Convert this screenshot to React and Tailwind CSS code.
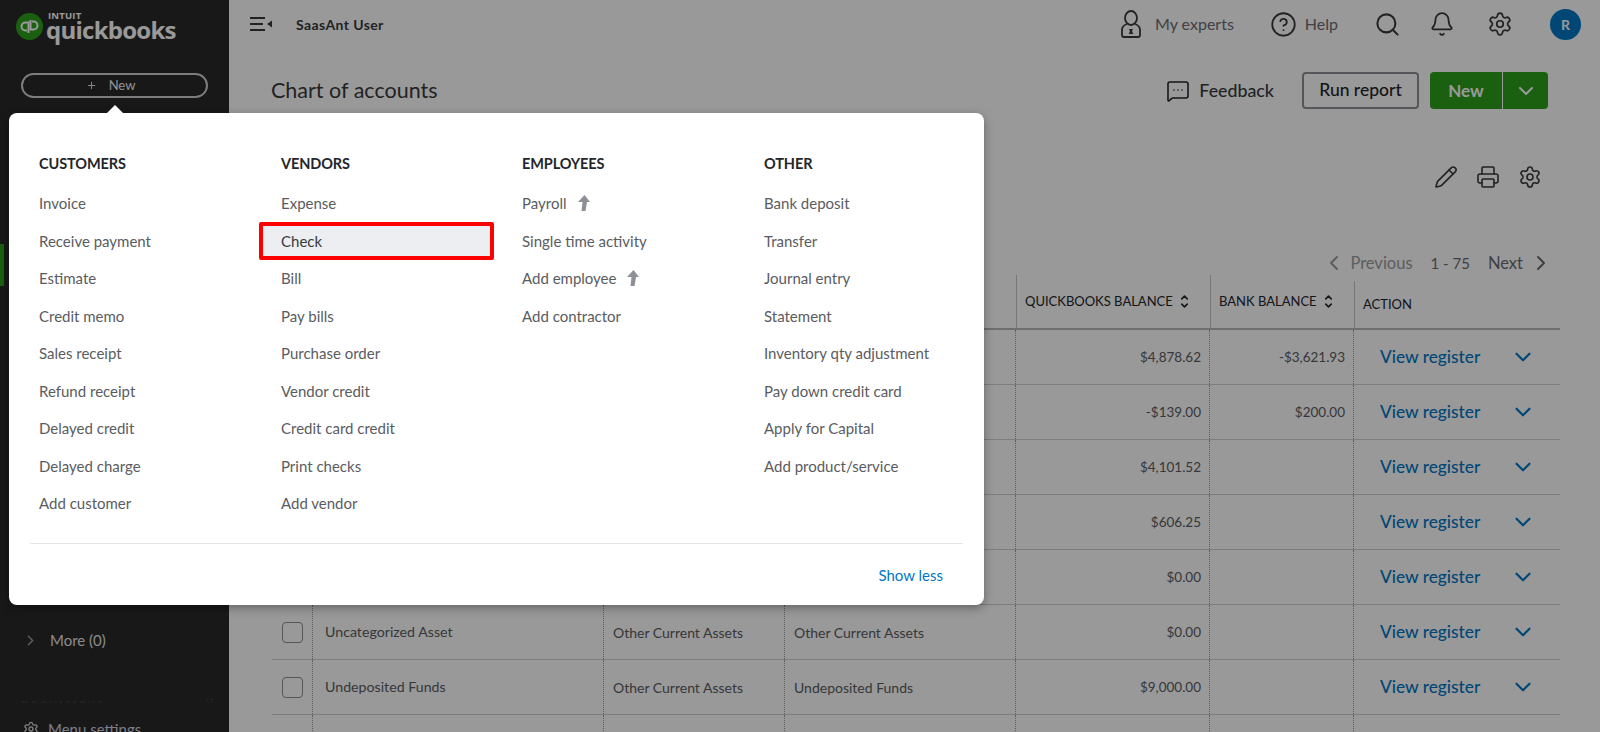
import React from "react";
import { Search, Bell, Settings, CircleHelp, Pencil, Printer, MessageSquareMore, ChevronDown, ChevronLeft, ChevronRight, ChevronUp, Plus, Pin } from "lucide-react";

const columns = [
  { title: "CUSTOMERS", items: ["Invoice", "Receive payment", "Estimate", "Credit memo", "Sales receipt", "Refund receipt", "Delayed credit", "Delayed charge", "Add customer"] },
  { title: "VENDORS", items: ["Expense", "Check", "Bill", "Pay bills", "Purchase order", "Vendor credit", "Credit card credit", "Print checks", "Add vendor"] },
  { title: "EMPLOYEES", items: ["Payroll", "Single time activity", "Add employee", "Add contractor"] },
  { title: "OTHER", items: ["Bank deposit", "Transfer", "Journal entry", "Statement", "Inventory qty adjustment", "Pay down credit card", "Apply for Capital", "Add product/service"] },
];
const upgrade = ["Payroll", "Add employee"];

const rows = [
  { qb: "$4,878.62", bank: "-$3,621.93" },
  { qb: "-$139.00", bank: "$200.00" },
  { qb: "$4,101.52" },
  { qb: "$606.25" },
  { qb: "$0.00" },
  { name: "Uncategorized Asset", type: "Other Current Assets", detail: "Other Current Assets", qb: "$0.00" },
  { name: "Undeposited Funds", type: "Other Current Assets", detail: "Undeposited Funds", qb: "$9,000.00" },
  { name: "", type: "", detail: "", qb: "" },
];

const grid = "grid grid-cols-[41px_291px_181px_231px_194px_144px_206px]";
const font = "font-['Lato','Noto_Sans',sans-serif]";

function Logo() {
  return (
    <div className="shrink-0 flex items-center gap-[3px] pl-[16px] pt-[12px]">
      <svg width="27" height="27" viewBox="0 0 27 27">
        <circle cx="13.5" cy="13.5" r="13.5" fill="#2ca01c" />
        <path d="M12.5 20V9.5H9.5a4 4 0 0 0 0 8H11" fill="none" stroke="#fff" strokeWidth="2" />
        <path d="M14.5 7v9.5h3a4 4 0 0 0 0-8H16" fill="none" stroke="#fff" strokeWidth="2" />
      </svg>
      <div className="flex flex-col text-white font-['Open_Sans',sans-serif]">
        <span className="ml-[2px] text-[9.5px] leading-[7px] font-bold tracking-[0.2px]">INTUIT</span>
        <span className="font-bold text-[24px] leading-[22px] tracking-[-0.75px]">quickbooks</span>
      </div>
    </div>
  );
}

function HamburgerIcon() {
  return (
    <svg width="22" height="14" viewBox="0 0 22 14" fill="none" stroke="#393a3d" strokeWidth="2">
      <path d="M0 1h15M0 7h13M0 13h15" />
      <path d="M22 3.5v7L17 7z" fill="#393a3d" stroke="none" />
    </svg>
  );
}

function ExpertIcon() {
  return (
    <svg width="20" height="28" viewBox="0 0 20 28" fill="none" stroke="#393a3d" strokeWidth="1.8">
      <ellipse cx="10" cy="8" rx="6" ry="7" />
      <path d="M6 14c-3 1-5 3-5 6v5a2 2 0 0 0 2 2h14a2 2 0 0 0 2-2v-5c0-3-2-5-5-6" />
      <path d="M8 19h4l-1 2 1.2 3H7.8L9 21z" fill="#393a3d" stroke="none" />
    </svg>
  );
}

function UpgradeArrow() {
  return (
    <svg width="13" height="16" viewBox="0 0 13 16" className="ml-[10px] shrink-0">
      <path d="M7.5 0L13 7H10L8.5 16H4.5L5.5 7H1z" fill="#8d9096" />
    </svg>
  );
}

function SortIcon() {
  return (
    <span className="ml-[6px] flex flex-col text-[#24262a]">
      <ChevronUp size={11} strokeWidth={3.5} className="-mb-[3px]" />
      <ChevronDown size={11} strokeWidth={3.5} />
    </span>
  );
}

function MenuItem({ label }) {
  if (label === "Check") {
    return (
      <a className="flex items-center h-[37.5px] w-[235px] -ml-[22px] pl-[18px] border-[4px] border-[#ff0000] rounded-[2px] bg-[#eceef1] text-[#393a3d]">
        {label}
      </a>
    );
  }
  return (
    <a className="flex items-center h-[37.5px] text-[#5a5c61]">
      {label}
      {upgrade.includes(label) && <UpgradeArrow />}
    </a>
  );
}

function NewMenu() {
  return (
    <div className="absolute z-20 left-[9px] top-[113px] w-[975px] h-[492px] bg-white rounded-lg shadow-[0_3px_10px_rgba(0,0,0,0.35)] flex flex-col text-[15px]">
      <span className="absolute left-[98px] -top-[8px] w-0 h-0 border-x-[8px] border-x-transparent border-b-[8px] border-b-white" />
      <div className="grid grid-cols-[242px_241px_242px_1fr] pl-[30px] pt-[41px] h-[430px]">
        {columns.map((c) => (
          <div key={c.title}>
            <h3 className="text-[14.5px] font-bold text-[#24262a] h-[20px] leading-[20px] mb-[10.5px] tracking-[-0.1px]">{c.title}</h3>
            {c.items.map((i) => <MenuItem key={i} label={i} />)}
          </div>
        ))}
      </div>
      <div className="mx-[21px] border-t border-[#e3e5e8]" />
      <div className="flex justify-end pr-[41px] pt-[21px] text-[#0077c5] text-[15px] leading-[20px]">Show less</div>
    </div>
  );
}

function Sidebar() {
  return (
    <aside className="w-[229px] shrink-0 bg-[#282828] flex flex-col h-full overflow-hidden">
      <Logo />
      <button className="shrink-0 mt-[32px] ml-[21px] w-[187px] h-[25px] pr-[8px] rounded-full border-2 border-[#d0d0d0] text-[#f0f0f0] text-[13px] flex items-center justify-center gap-[12px]">
        <Plus size={11} />
        <span>New</span>
      </button>
      <div className="shrink-0 mt-[146px] w-[4px] h-[42px] bg-[#2ca01c]" />
      <div className="shrink-0 mt-[342px] ml-[23px] flex items-center gap-[12px] text-[#e4e4e4] text-[15px] h-[24px]">
        <ChevronRight size={17} className="text-[#a0a0a0] -ml-[1px]" />
        <span className="-ml-[1px]">More (0)</span>
      </div>
      <div className="shrink-0 mt-[46px] pl-[21px] pr-[13px] flex items-start justify-between h-[5px] overflow-hidden text-[#3a3a3a] text-[12px] leading-[14px] font-bold tracking-[0.5px]">
        <span>BOOKMARKS</span>
        <Pin size={12} className="text-[#3a3a3a]" />
      </div>
      <div className="shrink-0 mt-[16px] ml-[23px] flex items-center gap-[9px] text-[#d0d0e0] text-[15px] h-[20px]">
        <Settings size={16} className="text-[#d4d4d4]" />
        <span>Menu settings</span>
      </div>
    </aside>
  );
}

function TopBar() {
  return (
    <header className="shrink-0 h-[48px] flex items-center pl-[21px] pr-[19px] text-[#393a3d]">
      <HamburgerIcon />
      <span className="ml-[24px] text-[14px] font-bold tracking-[0.4px] text-[#393a3d]">SaasAnt User</span>
      <div className="ml-auto flex items-center text-[#6b6c72] text-[16px]">
        <ExpertIcon />
        <span className="ml-[14px]">My experts</span>
        <CircleHelp size={27} strokeWidth={1.6} className="ml-[36px] text-[#393a3d]" />
        <span className="ml-[8px]">Help</span>
        <Search size={27} strokeWidth={1.8} className="ml-[36px] text-[#393a3d]" />
        <Bell size={26} strokeWidth={1.6} className="ml-[28px] text-[#393a3d]" />
        <Settings size={26} strokeWidth={1.6} className="ml-[32px] text-[#393a3d]" />
        <span className="ml-[37px] w-[31px] h-[31px] rounded-full bg-[#0077c5] text-white font-bold text-[14px] flex items-center justify-center">R</span>
      </div>
    </header>
  );
}

function Table() {
  return (
    <div className="text-[13.5px] text-[#5a5c61]">
      <div className={`${grid} h-[49px] border-b-2 border-[#b5b7bb] text-[#24262a] text-[13px]`}>
        <div /><div /><div /><div />
        <div className="border-l border-[#c4c6ca] flex items-center pl-[8px] -mt-[6px]">QUICKBOOKS BALANCE<SortIcon /></div>
        <div className="border-l border-[#c4c6ca] flex items-center pl-[8px] -mt-[6px]">BANK BALANCE<SortIcon /></div>
        <div className="border-l border-[#c4c6ca] flex items-center pl-[8px]">ACTION</div>
      </div>
      {rows.map((r, i) => (
        <div key={i} className={`${grid} h-[55px] border-b border-[#cfd1d5]`}>
          <div className="flex items-center pl-[10px] border-r border-dotted border-[#9a9a9a]">
            {r.name !== undefined && <span className="w-[21px] h-[21px] rounded-[4px] border border-[#8d9096]" />}
          </div>
          <div className="flex items-center pl-[12px] border-r border-dotted border-[#9a9a9a] text-[14.2px]">{r.name}</div>
          <div className="flex items-center pl-[9px] border-r border-dotted border-[#9a9a9a] text-[14px]">{r.type}</div>
          <div className="flex items-center pl-[9px] border-r border-dotted border-[#9a9a9a] text-[14px]">{r.detail}</div>
          <div className="flex items-center justify-end pr-[8px] border-r border-dotted border-[#9a9a9a]">{r.qb}</div>
          <div className="flex items-center justify-end pr-[8px] border-r border-dotted border-[#9a9a9a]">{r.bank}</div>
          <div className="flex items-center pl-[26px]">
            {r.qb && <span className="text-[#0077c5] text-[17.3px] font-medium">View register</span>}
            {r.qb && <ChevronDown size={26} strokeWidth={2} className="ml-[30px] text-[#0077c5]" />}
          </div>
        </div>
      ))}
    </div>
  );
}

function Main() {
  return (
    <main className="flex-1 min-w-0 flex flex-col bg-white h-full overflow-hidden">
      <TopBar />
      <div className="shrink-0 pl-[43px] pr-[40px]">
        <div className="mt-[24px] h-[37px] flex items-center pr-[12px]">
          <h1 className="text-[21.5px] text-[#393a3d] -ml-[1px]">Chart of accounts</h1>
          <div className="ml-auto flex items-center">
            <MessageSquareMore size={24} strokeWidth={1.6} className="text-[#24262a]" />
            <span className="ml-[9px] text-[17.8px] font-medium text-[#393a3d]">Feedback</span>
            <button className="ml-[28px] w-[117px] h-[37px] rounded-[4px] border-2 border-[#8d9096] text-[17.5px] font-medium text-[#24262a]">Run report</button>
            <div className="ml-[11px] flex gap-[1px] text-white h-[37px]">
              <button className="w-[72px] rounded-l-[4px] bg-[#2ca01c] font-bold text-[17px]">New</button>
              <button className="w-[45px] rounded-r-[4px] bg-[#2ca01c] flex items-center justify-center"><ChevronDown size={24} /></button>
            </div>
          </div>
        </div>
        <div className="mt-[55px] h-[26px] flex items-center justify-end gap-[18px] pr-[18px] text-[#393a3d]">
          <Pencil size={24} strokeWidth={1.6} />
          <Printer size={24} strokeWidth={1.6} />
          <Settings size={24} strokeWidth={1.6} />
        </div>
        <div className="mt-[61px] h-[24px] flex items-center justify-end text-[16.5px] text-[#6b6c72]">
          <ChevronLeft size={24} className="text-[#9a9ca0]" />
          <span className="ml-[4px] text-[#9a9ca0]">Previous</span>
          <span className="ml-[18px] text-[15px]">1 - 75</span>
          <span className="ml-[18px]">Next</span>
          <ChevronRight size={24} className="ml-[6px] mr-[7px]" />
        </div>
        <div className="mt-[6px]"><Table /></div>
      </div>
    </main>
  );
}

export default function App() {
  return (
    <div className={`relative w-[1600px] h-[732px] overflow-hidden flex ${font}`}>
      <Sidebar />
      <Main />
      <div className="absolute inset-0 z-10 bg-black/40" />
      <NewMenu />
    </div>
  );
}
